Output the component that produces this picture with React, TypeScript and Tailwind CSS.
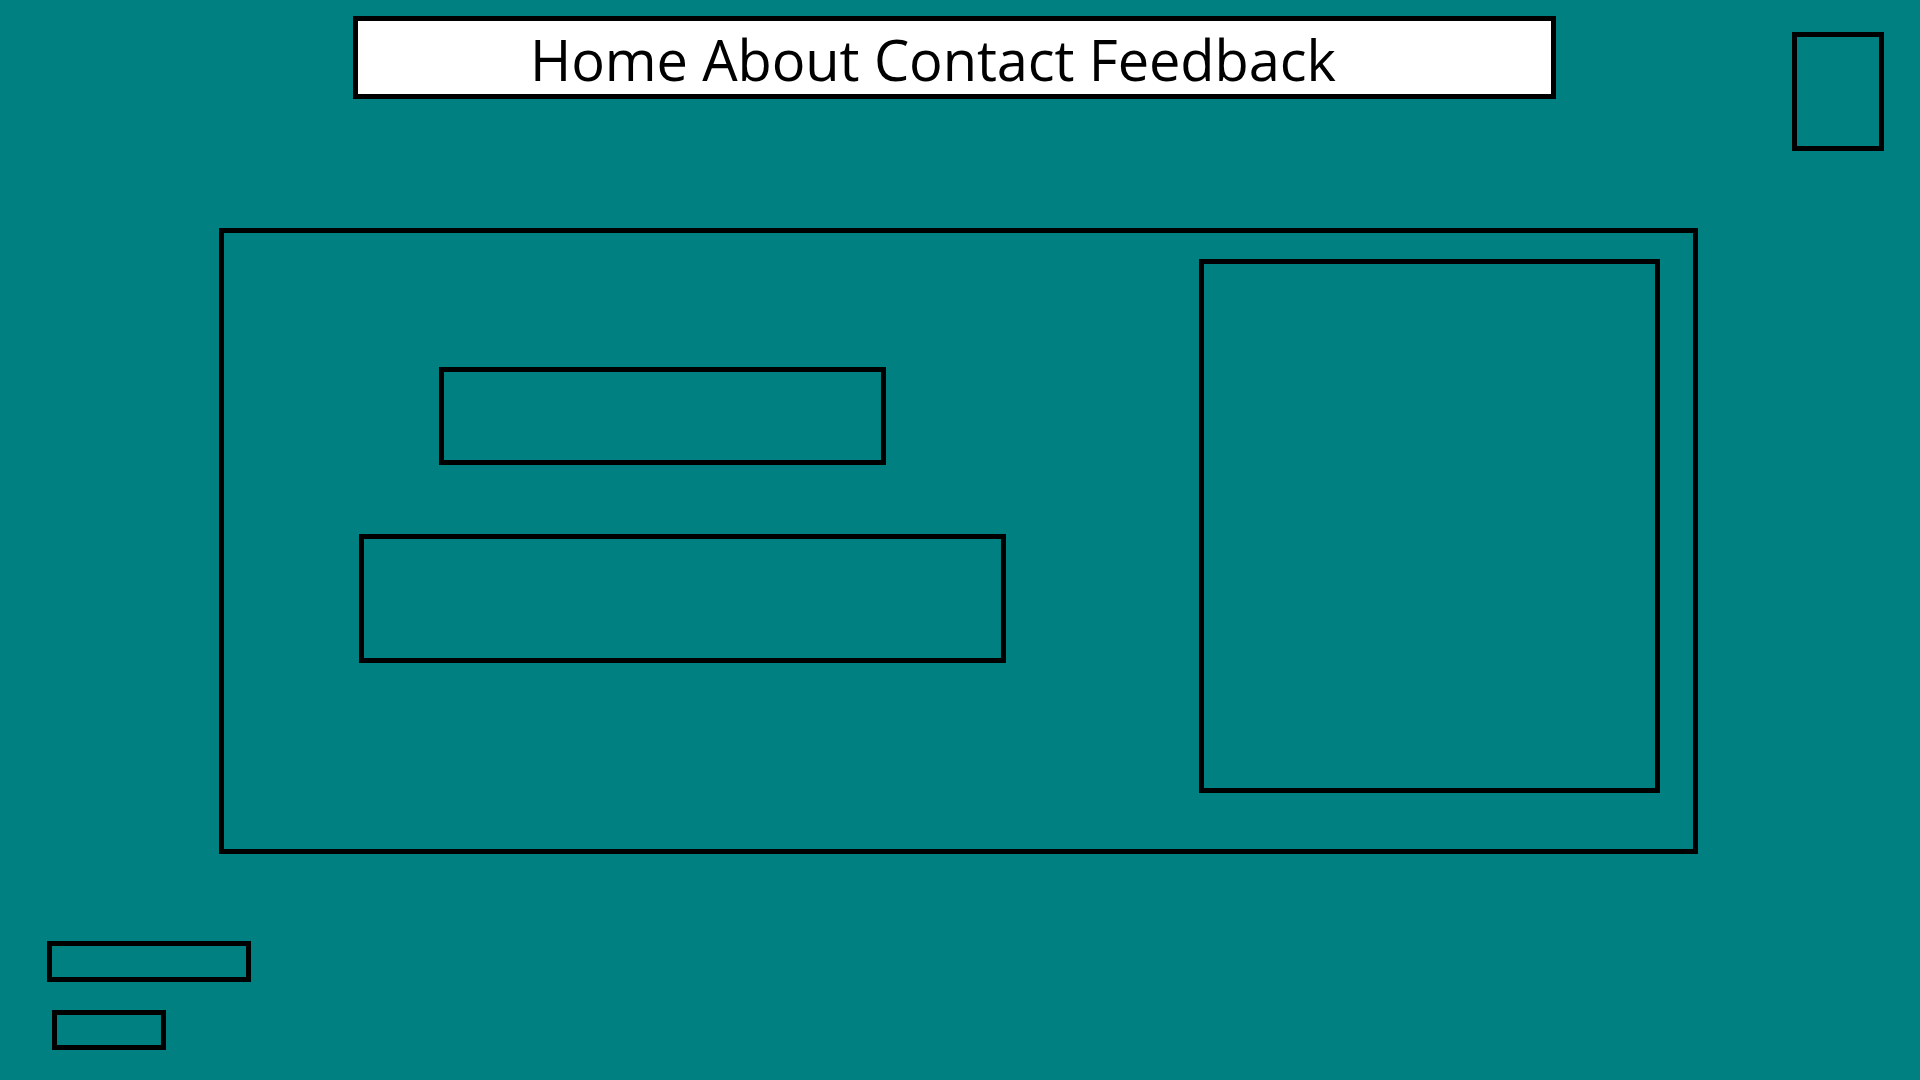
export default function App() {
  return (
    <div className="min-h-screen w-full bg-[#008080] overflow-hidden">
      {/* Header */}
      <div className="flex items-start pt-[16px]">
        <nav className="ml-[353px] w-[1203px] h-[83px] bg-white border-[5px] border-black flex items-center pl-[172px] pt-[3px]">
          <span
            className="text-black text-[56px] leading-none whitespace-nowrap tracking-[-0.1px]"
            style={{ fontFamily: '"Open Sans", sans-serif' }}
          >
            Home About Contact Feedback
          </span>
        </nav>
        <div className="ml-auto mr-[36px] mt-[16px] w-[92px] h-[119px] border-[5px] border-black" />
      </div>

      {/* Main panel */}
      <div className="ml-[219px] mt-[77px] w-[1479px] h-[626px] border-[5px] border-black flex items-start">
        <div className="flex flex-col pt-[134px]">
          <div className="ml-[215px] w-[447px] h-[98px] border-[5px] border-black" />
          <div className="ml-[135px] mt-[69px] w-[647px] h-[129px] border-[5px] border-black" />
        </div>
        <div className="ml-auto mr-[33px] mt-[26px] w-[461px] h-[534px] border-[5px] border-black" />
      </div>

      {/* Footer boxes */}
      <div className="flex flex-col items-start">
        <div className="ml-[47px] mt-[87px] w-[204px] h-[41px] border-[5px] border-black" />
        <div className="ml-[52px] mt-[28px] w-[114px] h-[40px] border-[5px] border-black" />
      </div>
    </div>
  );
}
